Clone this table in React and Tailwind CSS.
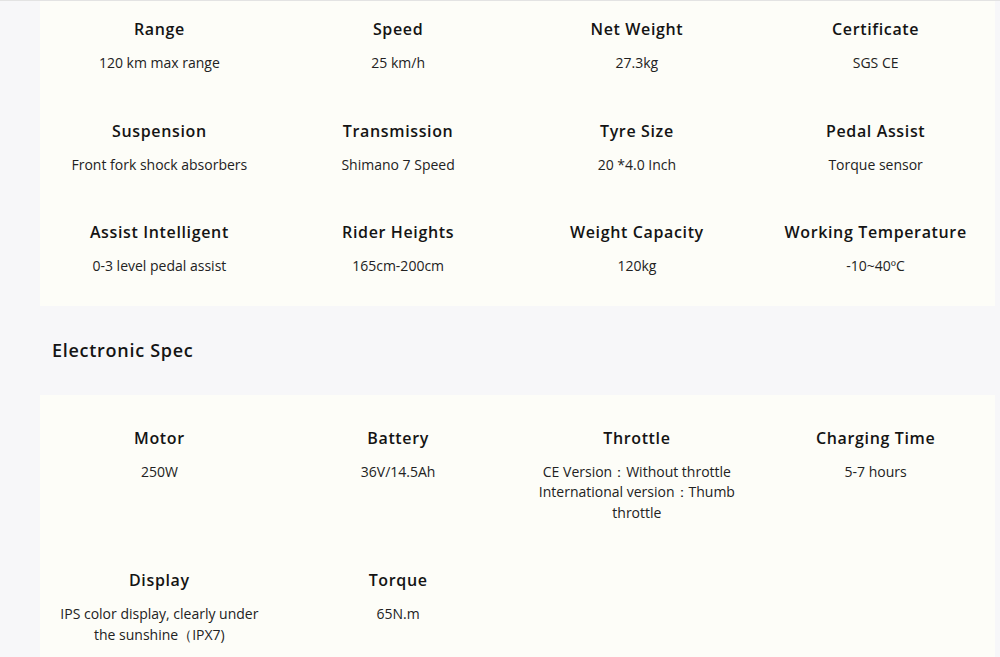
import React from 'react';

const basicSpecs = [
    { title: 'Range', value: ['120 km max range'] },
    { title: 'Speed', value: ['25 km/h'] },
    { title: 'Net Weight', value: ['27.3kg'] },
    { title: 'Certificate', value: ['SGS CE'] },
    { title: 'Suspension', value: ['Front fork shock absorbers'] },
    { title: 'Transmission', value: ['Shimano 7 Speed'] },
    { title: 'Tyre Size', value: ['20 *4.0 Inch'] },
    { title: 'Pedal Assist', value: ['Torque sensor'] },
    { title: 'Assist Intelligent', value: ['0-3 level pedal assist'] },
    { title: 'Rider Heights', value: ['165cm-200cm'] },
    { title: 'Weight Capacity', value: ['120kg'] },
    { title: 'Working Temperature', value: ['-10~40ºC'] }
];

const electronicSpecs = [
    { title: 'Motor', value: ['250W'] },
    { title: 'Battery', value: ['36V/14.5Ah'] },
    { title: 'Throttle', value: ['CE Version：Without throttle', 'International version：Thumb throttle'] },
    { title: 'Charging Time', value: ['5-7 hours'] },
    { title: 'Display', value: ['IPS color display, clearly under the sunshine（IPX7)'] },
    { title: 'Torque', value: ['65N.m'] }
];

const SpecCell = ({ spec }) => (
    <div className="flex flex-col items-center pt-[16px] pb-[29px] px-4 text-center">
        <h3 className="text-[16px] leading-6 font-semibold tracking-[0.04em] text-[#141414]">{spec.title}</h3>
        <div className="mt-3 text-[14px] leading-[20.5px] text-[#222] max-w-[210px]">
            {spec.value.map((v, i) => (
                <p key={i}>{v}</p>
            ))}
        </div>
    </div>
);

const App = () => {
    return (
        <div className="min-h-[657px] bg-[#f7f7f9] border-t border-[#e3e3e3] pl-10 pr-[5px] font-['Open_Sans',sans-serif]">
            <div className="bg-[#fdfdf8] grid grid-cols-4">
                {basicSpecs.map(s => (
                    <SpecCell key={s.title} spec={s} />
                ))}
            </div>

            <div className="h-[89px] flex items-center px-3">
                <h2 className="text-[18px] font-semibold tracking-[0.04em] text-[#141414]">Electronic Spec</h2>
            </div>

            <div className="bg-[#fdfdf8] grid grid-cols-4 pt-[15px]">
                {electronicSpecs.map(s => (
                    <SpecCell key={s.title} spec={s} />
                ))}
            </div>
        </div>
    );
};

export default App;
